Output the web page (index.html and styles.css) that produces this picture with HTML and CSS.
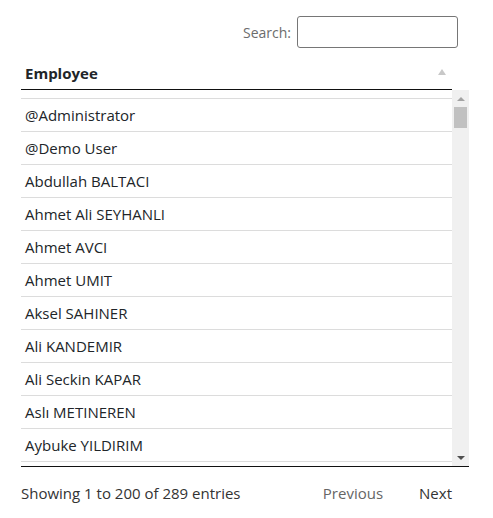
FILE: index.html
```html
<!DOCTYPE html>
<html lang="en">
<head>
  <meta charset="UTF-8">
  <meta name="viewport" content="width=device-width, initial-scale=1.0">
  <title>Employees</title>
  <link rel="stylesheet" href="styles.css">
</head>
<body>
  <div class="dt-wrapper">

    <!-- Search filter -->
    <div class="dt-filter">
      <label for="search">Search:</label>
      <input type="search" id="search">
    </div>

    <!-- Fixed header -->
    <div class="dt-head">
      <div class="dt-th sorting-asc">Employee</div>
    </div>

    <!-- Scrolling body -->
    <div class="dt-scroll">
      <div class="dt-body">
        <table class="dt-table">
          <tbody>
            <tr><td>@Administrator</td></tr>
            <tr><td>@Demo User</td></tr>
            <tr><td>Abdullah BALTACI</td></tr>
            <tr><td>Ahmet Ali SEYHANLI</td></tr>
            <tr><td>Ahmet AVCI</td></tr>
            <tr><td>Ahmet UMIT</td></tr>
            <tr><td>Aksel SAHINER</td></tr>
            <tr><td>Ali KANDEMIR</td></tr>
            <tr><td>Ali Seckin KAPAR</td></tr>
            <tr><td>Aslı METINEREN</td></tr>
            <tr><td>Aybuke YILDIRIM</td></tr>
          </tbody>
        </table>
        <div class="dt-rest"></div>
      </div>
      <div class="scrollbar">
        <div class="sb-btn sb-up"></div>
        <div class="sb-track"><div class="sb-thumb"></div></div>
        <div class="sb-btn sb-down"></div>
      </div>
    </div>

    <!-- Info + paging -->
    <div class="dt-footer">
      <div class="dt-info">Showing 1 to 200 of 289 entries</div>
      <div class="dt-paging">
        <a class="page-btn disabled">Previous</a>
        <a class="page-btn">Next</a>
      </div>
    </div>

  </div>
</body>
</html>
```

FILE: styles.css
```css
body { margin: 0; font-family: "Open Sans", "Noto Sans", Arial, sans-serif; font-size: 15px; color: #212529; background: #fff; }
.dt-wrapper { width: 448px; margin-left: 21px; }

.dt-filter { display: flex; justify-content: flex-end; align-items: center; gap: 6px; margin-top: 16px; margin-bottom: 5px; padding-right: 11px; color: #6c6c6c; font-size: 14px; }
.dt-filter input { width: 161px; height: 32px; box-sizing: border-box; border: 1px solid #767676; border-radius: 3px; padding: 2px 6px; font: inherit; }

.dt-head { width: 431px; border-bottom: 1px solid #111; }
.dt-th { position: relative; padding: 10px 18px 6px 4px; line-height: 20px; font-weight: 700; color: #212529; }
.sorting-asc::after { content: ""; position: absolute; right: 6px; top: 16px; border-left: 4px solid transparent; border-right: 4px solid transparent; border-bottom: 6px solid #c8c8c8; }

.dt-scroll { display: flex; height: 377px; border-bottom: 1px solid #111; box-sizing: border-box; }
.dt-body { flex: 1; overflow: hidden; padding-top: 8px; }
.dt-table { width: 100%; border-collapse: collapse; }
.dt-table td { padding: 8px 4px; line-height: 16px; border-top: 1px solid #dcdcdc; white-space: nowrap; }
.dt-rest { height: 40px; border-top: 1px solid #dcdcdc; }

/* drawn scrollbar: 200 rows in a 376px window */
.scrollbar { width: 17px; display: flex; flex-direction: column; background: #f0f0f0; }
.sb-btn { height: 17px; display: flex; align-items: center; justify-content: center; }
.sb-up::before { content: ""; border-left: 4px solid transparent; border-right: 4px solid transparent; border-bottom: 4px solid #a3a3a3; }
.sb-down::before { content: ""; border-left: 4px solid transparent; border-right: 4px solid transparent; border-top: 4px solid #505050; }
.sb-track { flex: 1; padding: 0 2px; }
.sb-thumb { height: 21px; background: #c1c1c1; }

.dt-footer { display: flex; justify-content: space-between; align-items: center; margin-top: 15px; line-height: 22px; color: #333; }
.dt-paging { display: flex; }
.page-btn { padding: 0 17px; margin-left: 2px; color: #333; cursor: pointer; }
.page-btn.disabled { color: #666; cursor: default; }
```
